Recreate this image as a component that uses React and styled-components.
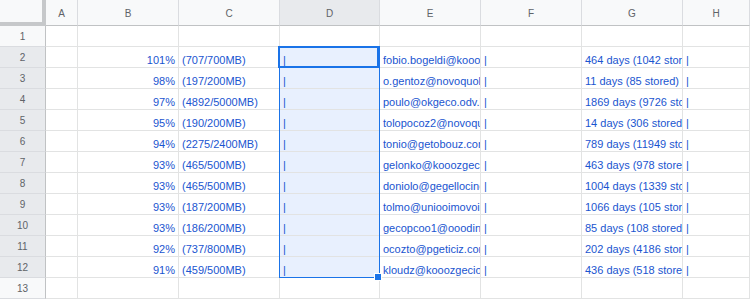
import React from 'react'
import styled, { createGlobalStyle } from 'styled-components'

const GlobalStyle = createGlobalStyle`
  html, body { margin: 0; padding: 0; background: #fff; }
  body { font-family: "Liberation Sans", Arial, sans-serif; }
`

const columns = ['A', 'B', 'C', 'D', 'E', 'F', 'G', 'H']

const rows = [
  ['101%', '(707/700MB)', 'fobio.bogeldi@kooozgecio.com', '464 days (1042 stored)'],
  ['98%', '(197/200MB)', 'o.gentoz@novoquolity.com', '11 days (85 stored)'],
  ['97%', '(4892/5000MB)', 'poulo@okgeco.odv.br', '1869 days (9726 stored)'],
  ['95%', '(190/200MB)', 'tolopocoz2@novoquolity.com', '14 days (306 stored)'],
  ['94%', '(2275/2400MB)', 'tonio@getobouz.com', '789 days (11949 stored)'],
  ['93%', '(465/500MB)', 'gelonko@kooozgecio.com', '463 days (978 stored)'],
  ['93%', '(465/500MB)', 'doniolo@gegellocino.com', '1004 days (1339 stored)'],
  ['93%', '(187/200MB)', 'tolmo@uniooimovoi.com', '1066 days (105 stored)'],
  ['93%', '(186/200MB)', 'gecopcoo1@ooodino.com', '85 days (108 stored)'],
  ['92%', '(737/800MB)', 'ocozto@pgeticiz.com', '202 days (4186 stored)'],
  ['91%', '(459/500MB)', 'kloudz@kooozgecioc.com', '436 days (518 stored)'],
]

function App() {
  const body = []
  for (let r = 1; r <= 13; r++) {
    const data = rows[r - 2]
    const inSel = r >= 2 && r <= 12
    body.push(<RowHeader key={'h' + r} active={inSel}>{r}</RowHeader>)
    body.push(<Cell key={r + 'A'} />)
    body.push(<Cell key={r + 'B'} right>{data && data[0]}</Cell>)
    body.push(<Cell key={r + 'C'}>{data && data[1]}</Cell>)
    body.push(<Cell key={r + 'D'} selected={inSel}>{data && '|'}</Cell>)
    body.push(<Cell key={r + 'E'}>{data && data[2]}</Cell>)
    body.push(<Cell key={r + 'F'}>{data && '|'}</Cell>)
    body.push(<Cell key={r + 'G'}>{data && data[3]}</Cell>)
    body.push(<Cell key={r + 'H'}>{data && '|'}</Cell>)
  }

  return (
    <>
      <GlobalStyle />
      <Sheet>
        <Corner />
        {columns.map(c => (
          <ColHeader key={c} active={c === 'D'}>{c}</ColHeader>
        ))}
        {body}
        <Range />
        <ActiveCell />
        <FillHandle />
      </Sheet>
    </>
  )
}

export default App

const Sheet = styled.div`
position:relative;
display:grid;
grid-template-columns:46px 32px 101px 101px 100px 101px 101px 101px 1fr;
grid-template-rows:26px repeat(13, 21px);
width:750px;
height:300px;
overflow:hidden;
font-family:"Liberation Sans", Arial, sans-serif;
`
const Corner = styled.div`
box-sizing:border-box;
background:#f8f9fa;
border-right:4px solid #c6c8ca;
border-bottom:4px solid #c6c8ca;
`
const ColHeader = styled.div`
box-sizing:border-box;
display:flex;
align-items:center;
justify-content:center;
padding-top:2px;
background:${p => (p.active ? '#e8eaed' : '#f8f9fa')};
border-right:1px solid #dadce0;
border-bottom:1px solid #c0c2c4;
color:#5f6368;
font-size:10px;
`
const RowHeader = styled.div`
box-sizing:border-box;
display:flex;
align-items:center;
justify-content:center;
background:${p => (p.active ? '#e8eaed' : '#f8f9fa')};
border-right:1px solid #c0c2c4;
border-bottom:1px solid #dadce0;
color:#5f6368;
font-size:10px;
`
const Cell = styled.div`
box-sizing:border-box;
display:flex;
align-items:flex-end;
justify-content:${p => (p.right ? 'flex-end' : 'flex-start')};
padding:${p => (p.right ? '0 3px 0 0' : '0 0 0 3px')};
background:${p => (p.selected ? '#e8f0fe' : '#fff')};
border-right:1px solid #e2e3e3;
border-bottom:1px solid #e2e3e3;
color:#1a55d0;
font-size:11px;
line-height:14px;
white-space:nowrap;
overflow:hidden;
`
const Range = styled.div`
position:absolute;
left:279px;
top:46px;
width:101px;
height:232px;
box-sizing:border-box;
border:1px solid #1a73e8;
pointer-events:none;
`
const ActiveCell = styled.div`
position:absolute;
left:278px;
top:46px;
width:101px;
height:22px;
box-sizing:border-box;
border:2px solid #1a73e8;
pointer-events:none;
`
const FillHandle = styled.div`
position:absolute;
left:374px;
top:273px;
width:8px;
height:8px;
box-sizing:border-box;
background:#1a73e8;
border:1px solid #fff;
`
